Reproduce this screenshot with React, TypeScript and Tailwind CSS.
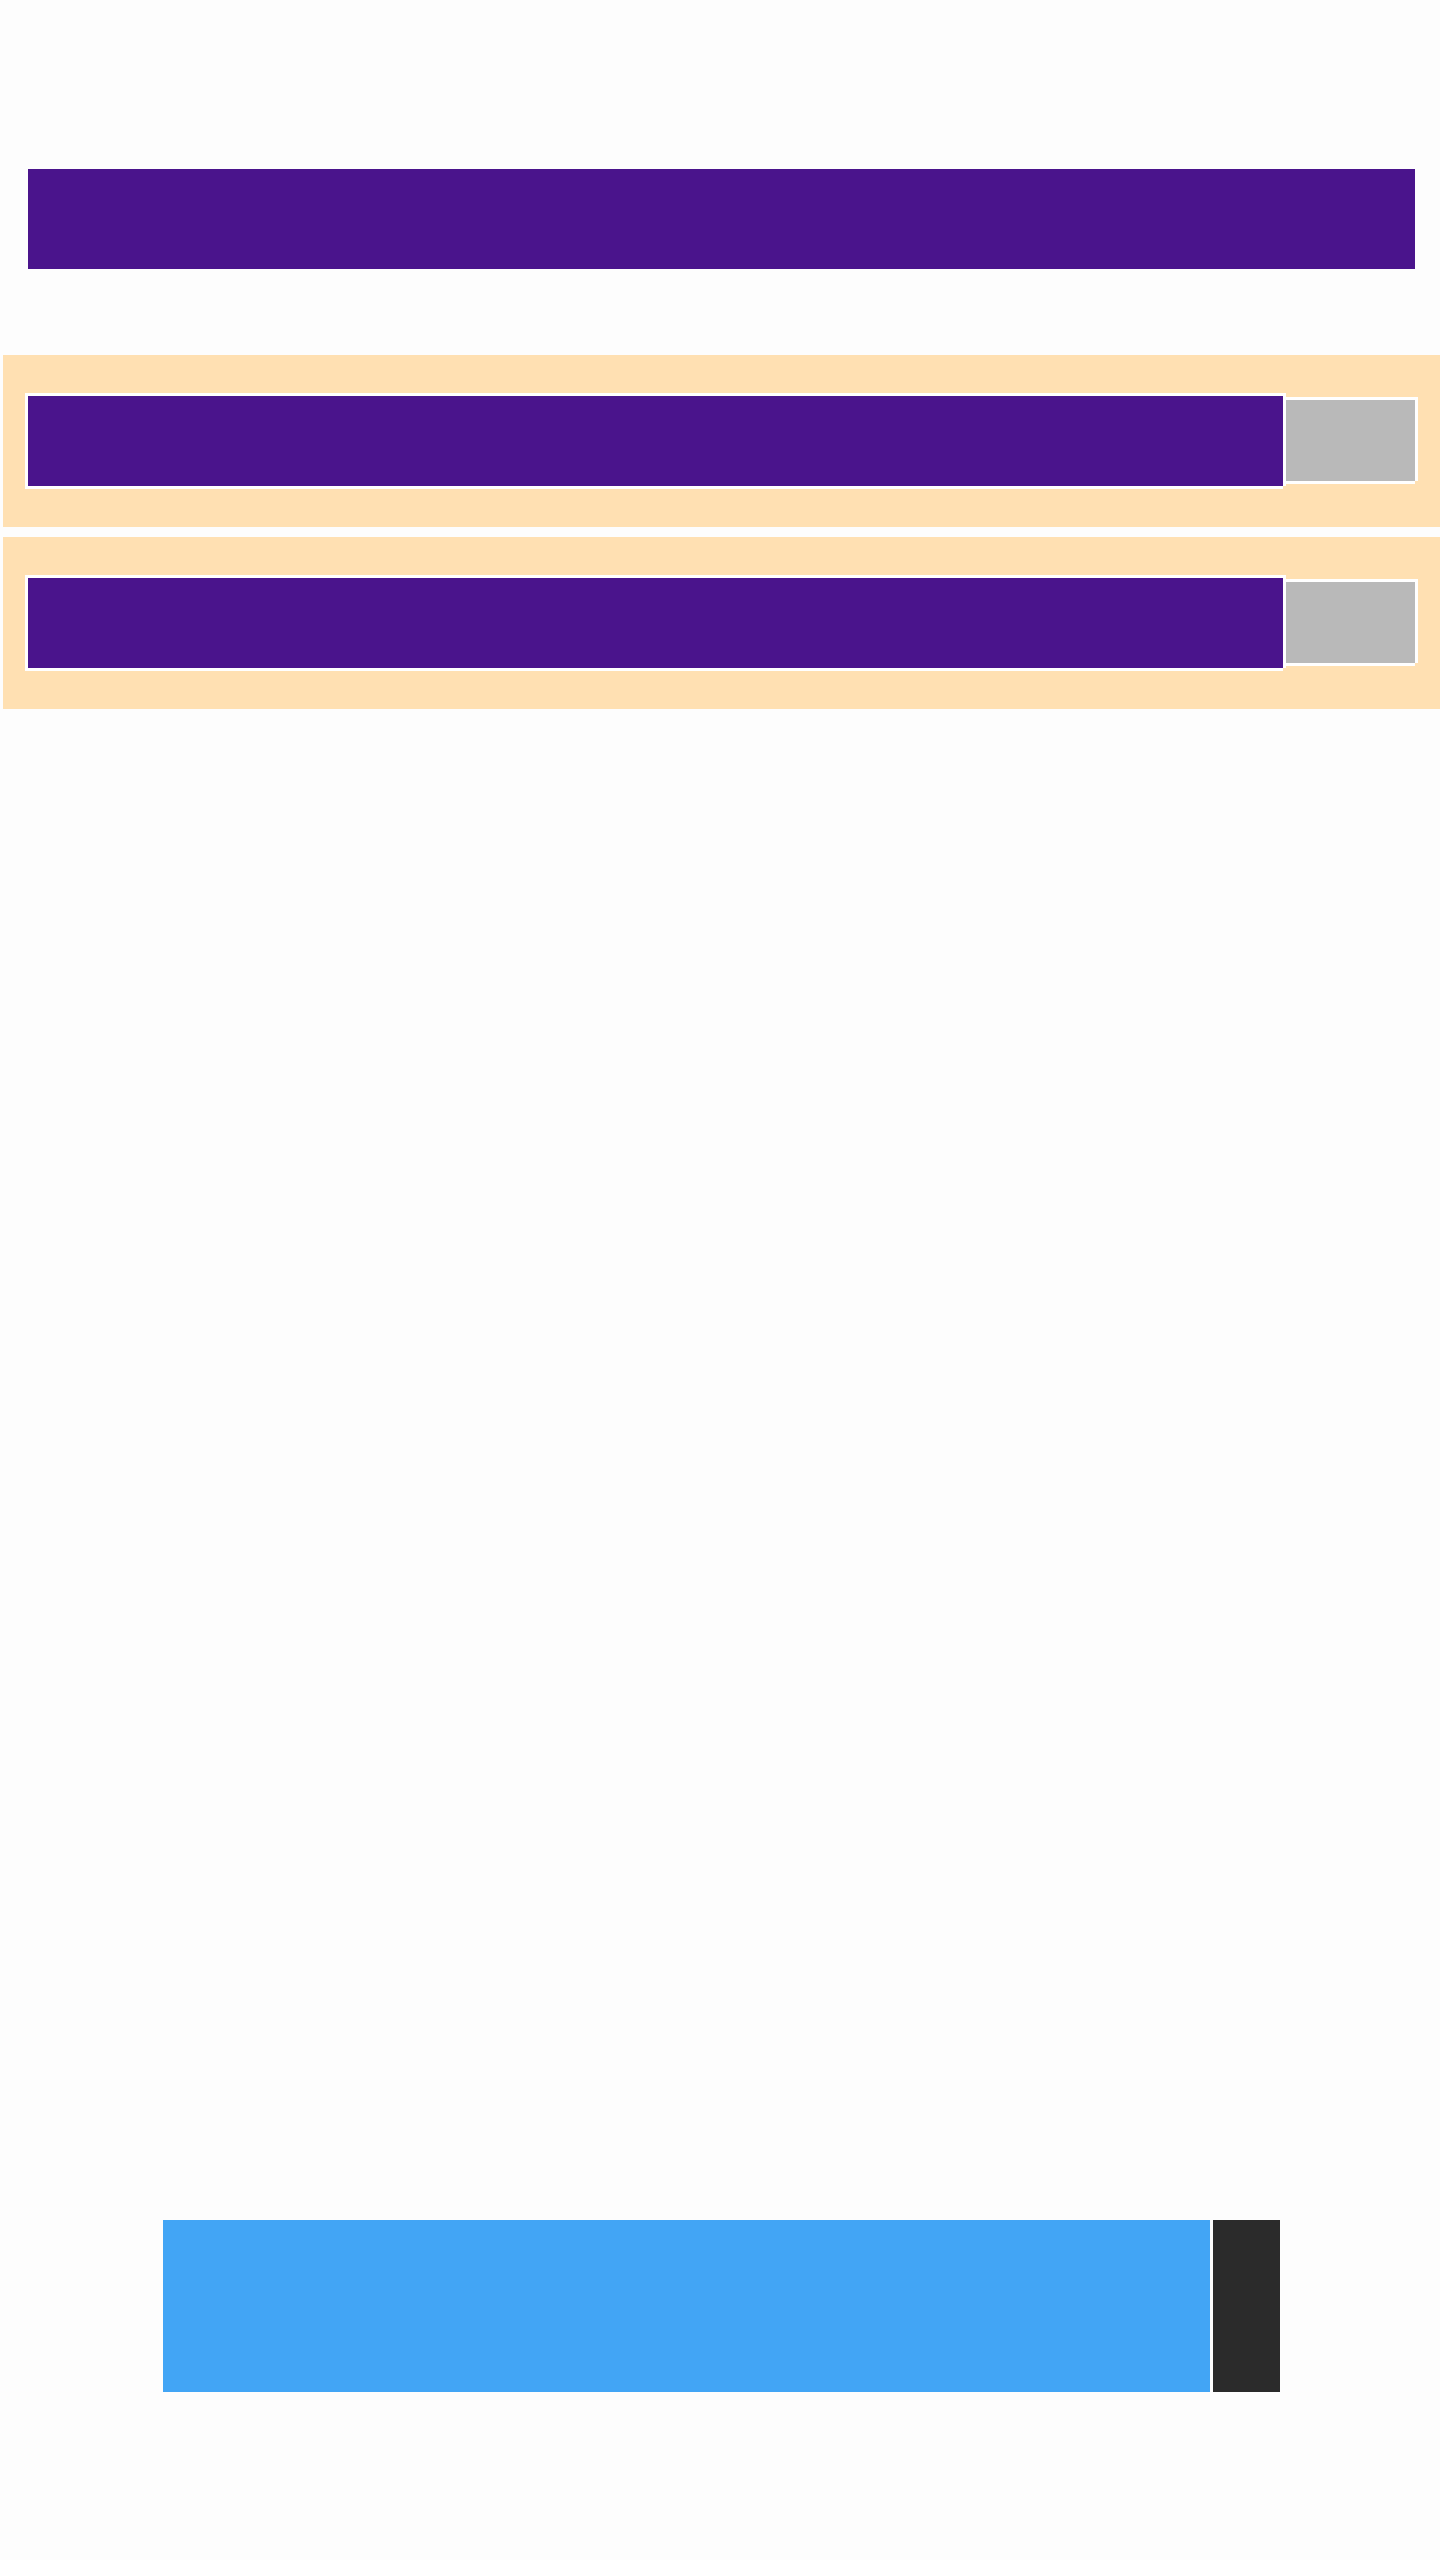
const frame =
  "shadow-[-3px_-3px_0_#fff,0_-3px_0_#fff,3px_-3px_0_#fff,-3px_0_0_#fff,3px_0_0_#fff,-3px_3px_0_#fff,0_3px_0_#fff]";

const Row = () => (
  <div className="flex h-[172px] w-[1437px] items-start bg-[#ffe0b2] pl-[25px] pt-[41px]">
    <div className={`h-[90px] w-[1255px] shrink-0 bg-[#4a148c] ${frame}`} />
    <div className={`ml-[3px] mt-[4px] h-[81px] w-[129px] shrink-0 bg-[#b9b9b9] ${frame}`} />
  </div>
);

export default function App() {
  return (
    <div className="min-h-[2560px] overflow-hidden bg-[#fdfdfd] pt-[169px]">
      {/* top bar */}
      <div className="ml-[28px] h-[100px] w-[1387px] bg-[#4a148c]" />

      {/* rows */}
      <div className="ml-[3px] mt-[86px] flex flex-col gap-[10px]">
        <Row />
        <Row />
      </div>

      {/* bottom block */}
      <div className="ml-[163px] mt-[1511px] flex h-[172px]">
        <div className="w-[1047px] bg-[#42a5f5]" />
        <div className="ml-[3px] w-[67px] bg-[#2b2b2b]" />
      </div>
    </div>
  );
}
